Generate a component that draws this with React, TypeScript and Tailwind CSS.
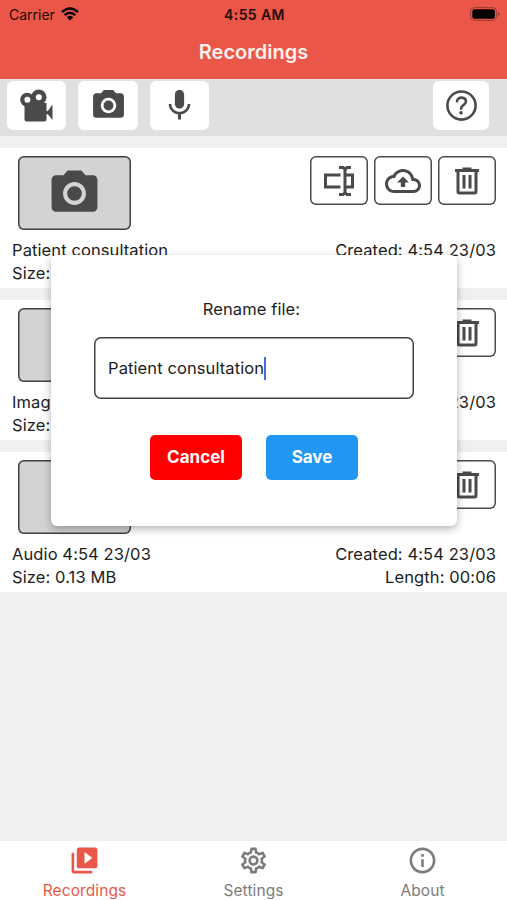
import type { ReactNode } from 'react'

const icons = {
  camera:
    'M9 2L7.17 4H4c-1.1 0-2 .9-2 2v12c0 1.1.9 2 2 2h16c1.1 0 2-.9 2-2V6c0-1.1-.9-2-2-2h-3.17L15 2H9zm3 15c-2.76 0-5-2.24-5-5s2.24-5 5-5 5 2.24 5 5-2.24 5-5 5zM12 8.8a3.2 3.2 0 1 0 0 6.4a3.2 3.2 0 1 0 0-6.4z',
  mic: 'M12 14c1.66 0 2.99-1.34 2.99-3L15 5c0-1.66-1.34-3-3-3S9 3.34 9 5v6c0 1.66 1.34 3 3 3zm5.3-3c0 3-2.54 5.1-5.3 5.1S6.7 14 6.7 11H5c0 3.41 2.72 6.23 6 6.72V21h2v-3.28c3.28-.48 6-3.3 6-6.72h-1.7z',
  rename:
    'M17,7H22V17H17V19A1,1 0 0,0 18,20H20V22H17.5C16.95,22 16,21.55 16,21C16,21.55 15.05,22 14.5,22H12V20H14A1,1 0 0,0 15,19V5A1,1 0 0,0 14,4H12V2H14.5C15.05,2 16,2.45 16,3C16,2.45 16.95,2 17.5,2H20V4H18A1,1 0 0,0 17,5V7M2,7H13V9H4V15H13V17H2V7M20,15V9H17V15H20Z',
  upload:
    'M19.35 10.04C18.67 6.59 15.64 4 12 4 9.11 4 6.6 5.64 5.35 8.04 2.34 8.36 0 10.91 0 14c0 3.31 2.69 6 6 6h13c2.76 0 5-2.24 5-5 0-2.64-2.05-4.78-4.65-4.96zM19 18H6c-2.21 0-4-1.79-4-4 0-2.05 1.53-3.76 3.56-3.97l1.07-.11.5-.95C8.08 7.14 9.94 6 12 6c2.62 0 4.88 1.86 5.39 4.43l.3 1.5 1.53.11c1.56.1 2.78 1.41 2.78 2.96 0 1.65-1.35 3-3 3zM8 13h2.55v3h2.9v-3H16l-4-4z',
  trash:
    'M9,3V4H4V6H5V19A2,2 0 0,0 7,21H17A2,2 0 0,0 19,19V6H20V4H15V3H9M7,6H17V19H7V6M9,8V17H11V8H9M13,8V17H15V8H13Z',
  library:
    'M4,6H2V20A2,2 0 0,0 4,22H18V20H4V6M20,2H8A2,2 0 0,0 6,4V16A2,2 0 0,0 8,18H20A2,2 0 0,0 22,16V4A2,2 0 0,0 20,2M12,14.5V5.5L18,10L12,14.5Z',
  settings:
    'M12,8A4,4 0 0,1 16,12A4,4 0 0,1 12,16A4,4 0 0,1 8,12A4,4 0 0,1 12,8M12,10A2,2 0 0,0 10,12A2,2 0 0,0 12,14A2,2 0 0,0 14,12A2,2 0 0,0 12,10M10,22C9.75,22 9.54,21.82 9.5,21.58L9.13,18.93C8.5,18.68 7.96,18.34 7.44,17.94L4.95,18.95C4.73,19.03 4.46,18.95 4.34,18.73L2.34,15.27C2.21,15.05 2.27,14.78 2.46,14.63L4.57,12.97L4.5,12L4.57,11L2.46,9.37C2.27,9.22 2.21,8.95 2.34,8.73L4.34,5.27C4.46,5.05 4.73,4.96 4.95,5.05L7.44,6.05C7.96,5.66 8.5,5.32 9.13,5.07L9.5,2.42C9.54,2.18 9.75,2 10,2H14C14.25,2 14.46,2.18 14.5,2.42L14.87,5.07C15.5,5.32 16.04,5.66 16.56,6.05L19.05,5.05C19.27,4.96 19.54,5.05 19.66,5.27L21.66,8.73C21.79,8.95 21.73,9.22 21.54,9.37L19.43,11L19.5,12L19.43,13L21.54,14.63C21.73,14.78 21.79,15.05 21.66,15.27L19.66,18.73C19.54,18.95 19.27,19.04 19.05,18.95L16.56,17.95C16.04,18.34 15.5,18.68 14.87,18.93L14.5,21.58C14.46,21.82 14.25,22 14,22H10M11.25,4L10.88,6.61C9.68,6.86 8.62,7.5 7.85,8.39L5.44,7.35L4.69,8.65L6.8,10.2C6.4,11.37 6.4,12.64 6.8,13.8L4.68,15.36L5.43,16.66L7.86,15.62C8.63,16.5 9.68,17.14 10.87,17.38L11.24,20H12.76L13.13,17.39C14.32,17.14 15.37,16.5 16.14,15.62L18.57,16.66L19.32,15.36L17.2,13.81C17.6,12.64 17.6,11.37 17.2,10.2L19.31,8.65L18.56,7.35L16.15,8.39C15.38,7.5 14.32,6.86 13.12,6.62L12.75,4H11.25Z',
  about:
    'M11,9H13V7H11M12,20C7.59,20 4,16.41 4,12C4,7.59 7.59,4 12,4C16.41,4 20,7.59 20,12C20,16.41 16.41,20 12,20M12,2A10,10 0 0,0 2,12A10,10 0 0,0 12,22A10,10 0 0,0 22,12A10,10 0 0,0 12,2M11,17H13V11H11V17Z',
}

type IconName = keyof typeof icons

function Icon({ name, className = '' }: { name: IconName; className?: string }) {
  return (
    <svg viewBox="0 0 24 24" fill="currentColor" className={`shrink-0 ${className}`}>
      <path d={icons[name]} />
    </svg>
  )
}

function FilmCameraIcon() {
  return (
    <svg viewBox="0 0 34 34" fill="currentColor" className="h-[34px] w-[34px] shrink-0">
      <circle cx="7.200" cy="10.800" r="7" />
      <circle cx="18.800" cy="8.200" r="7.700" />
      <path d="M4.500 14h22v8.200l1.500-.4 4.500-6.300v15.500l-4.500-5.500-1.500-.4v5.400q0 2-2 2h-18q-2 0-2-2z" />
      <g fill="white">
        <circle cx="7.400" cy="10.800" r="3" />
        <circle cx="18.800" cy="8.300" r="3" />
      </g>
    </svg>
  )
}

function HelpIcon() {
  return (
    <svg viewBox="0 0 512 512" fill="none" stroke="currentColor" className="h-[41px] w-[41px]">
      <circle cx="256" cy="256" r="176" strokeWidth="32" />
      <path
        strokeWidth="32"
        strokeLinecap="round"
        d="M200 202.290s.84-17.500 19.570-32.570C230.680 160.770 244 158.180 256 158c10.930-.14 20.690 1.670 26.530 4.450 10 4.760 29.470 16.380 29.470 41.090 0 26-17 37.810-36.370 50.800S251 281.430 251 296"
      />
      <circle cx="250" cy="348" r="22" fill="currentColor" stroke="none" />
    </svg>
  )
}

function StatusBar() {
  return (
    <div className="grid h-7 grid-cols-3 items-center pl-[9px] pr-[7px] text-[14px] text-[#240806]">
      <div className="flex items-center gap-[6px]">
        <span>Carrier</span>
        <svg viewBox="0 0 18 14" fill="none" stroke="black" className="h-[14px] w-[18px]">
          <path strokeWidth="2.500" d="M1 5.200Q9-2.200 17 5.200" />
          <path strokeWidth="2.400" d="M3.700 8.200Q9 3.300 14.300 8.200" />
          <path fill="black" stroke="none" d="M5.800 10.200Q9 7.400 12.200 10.200L9 13.500z" />
        </svg>
      </div>
      <span className="text-center font-semibold tracking-[0.4px]">4:55 AM</span>
      <svg viewBox="0 0 30 14" className="h-[14px] w-[30px] justify-self-end">
        <rect x="0.600" y="0.600" width="26" height="12.800" rx="3.800" fill="none" stroke="#9c3b30" />
        <rect x="2.300" y="2.300" width="22.600" height="9.400" rx="2.200" />
        <path d="M28 5v4q1.600-.6 1.600-2t-1.600-2z" fill="#9c3b30" />
      </svg>
    </div>
  )
}

function ToolButton({ children, className = 'w-[59px]' }: { children: ReactNode; className?: string }) {
  return (
    <button className={`flex h-[49px] items-center justify-center rounded-[6px] bg-white ${className}`}>
      {children}
    </button>
  )
}

function Toolbar() {
  return (
    <div className="flex h-[57px] gap-[12px] bg-[#e0e0e0] pl-[7px] pr-[18px] pt-[2px] text-[#4a4a4a]">
      <ToolButton>
        <FilmCameraIcon />
      </ToolButton>
      <ToolButton className="w-[60px]">
        <Icon name="camera" className="h-[37px] w-[37px]" />
      </ToolButton>
      <ToolButton>
        <Icon name="mic" className="h-[37px] w-[37px]" />
      </ToolButton>
      <ToolButton className="ml-auto w-[56px]">
        <HelpIcon />
      </ToolButton>
    </div>
  )
}

function ActionButton({ name }: { name: IconName }) {
  return (
    <button className="flex h-[49px] w-[58px] items-center justify-center rounded-[6px] shadow-[inset_0_0_0_1.5px_#4a4a4a]">
      <Icon name={name} className="h-9 w-9" />
    </button>
  )
}

type Recording = {
  title: string
  size: string
  length?: string
  icon: IconName
  actions: IconName[]
}

const recordings: Recording[] = [
  { title: 'Patient consultation', size: '0.13 MB', icon: 'camera', actions: ['rename', 'upload', 'trash'] },
  { title: 'Image 4:54 23/03', size: '0.13 MB', icon: 'camera', actions: ['trash'] },
  { title: 'Audio 4:54 23/03', size: '0.13 MB', length: '00:06', icon: 'mic', actions: ['trash'] },
]

function RecordingCard({ item }: { item: Recording }) {
  return (
    <div className="h-[140px] bg-white pl-[12px] pr-[11px] pt-[8px]">
      <div className="flex items-start justify-between pl-[6px] text-[#4a4a4a]">
        <div className="flex h-[74px] w-[113px] items-center justify-center rounded-[6px] bg-[#d3d3d3] shadow-[inset_0_0_0_1.5px_#404040]">
          <Icon name={item.icon} className="h-[55px] w-[55px]" />
        </div>
        <div className="flex gap-[6px]">
          {item.actions.map((action) => (
            <ActionButton key={action} name={action} />
          ))}
        </div>
      </div>
      <div className="mt-[9px] flex justify-between text-[16.500px] leading-[23px] tracking-[0.1px] text-[#1c1c1c]">
        <div>
          <p>{item.title}</p>
          <p>Size: {item.size}</p>
        </div>
        <div className="text-right">
          <p>Created: 4:54 23/03</p>
          {item.length && <p>Length: {item.length}</p>}
        </div>
      </div>
    </div>
  )
}

function RenameDialog() {
  return (
    <div className="absolute left-[51px] top-[255px] flex h-[271px] w-[406px] flex-col items-center rounded-[6px] bg-white text-[16.500px] tracking-[0.1px] text-[#1c1c1c] shadow-[0_3px_8px_rgba(0,0,0,0.3)]">
      <p className="mt-[42px] pr-[5px] leading-6">Rename file:</p>
      <div className="mt-[16px] flex h-[62px] w-[320px] items-center rounded-[7px] pl-[14px] shadow-[inset_0_0_0_1.5px_#404040]">
        <span>Patient consultation</span>
        <span className="h-[23px] w-[2px] bg-[#4a67e8]" />
      </div>
      <div className="mt-[36px] flex gap-[24px] text-[17px] font-bold tracking-normal text-white">
        <button className="h-[45px] w-[92px] rounded-[5px] bg-[#ff0000]">Cancel</button>
        <button className="h-[45px] w-[92px] rounded-[5px] bg-[#2196f3]">Save</button>
      </div>
    </div>
  )
}

const tabs: { label: string; icon: IconName }[] = [
  { label: 'Recordings', icon: 'library' },
  { label: 'Settings', icon: 'settings' },
  { label: 'About', icon: 'about' },
]

function TabBar() {
  return (
    <nav className="mt-auto grid h-[59px] grid-cols-3 bg-white pt-[4px]">
      {tabs.map((tab, i) => (
        <button
          key={tab.label}
          className={`flex flex-col items-center text-[15.500px] leading-[20px] tracking-[0.1px] ${i === 0 ? 'text-[#e95748]' : 'text-[#7c7c7c]'}`}
        >
          <Icon name={tab.icon} className="mb-[5px] h-[31px] w-[31px]" />
          {tab.label}
        </button>
      ))}
    </nav>
  )
}

export default function App() {
  return (
    <div className="relative flex h-[900px] w-[507px] flex-col overflow-hidden bg-[#f0f0f0] font-[Inter,sans-serif]">
      <header className="h-[79px] bg-[#ea5748]">
        <StatusBar />
        <h1 className="mt-[9px] text-center text-[20px] font-semibold leading-[30px] text-[#fff1ee]">Recordings</h1>
      </header>
      <Toolbar />
      <main className="mt-[12px] flex flex-col gap-[12px]">
        {recordings.map((item) => (
          <RecordingCard key={item.title} item={item} />
        ))}
      </main>
      <TabBar />
      <RenameDialog />
    </div>
  )
}
